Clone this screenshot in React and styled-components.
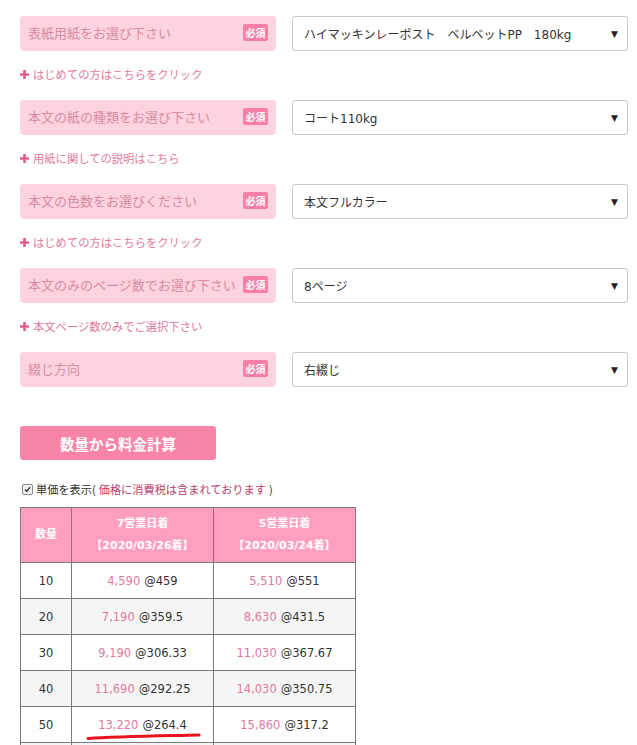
import React from 'react'
import styled, { createGlobalStyle } from 'styled-components'

const GlobalStyle = createGlobalStyle`
  body {
    margin: 0;
    background: #fff;
    font-family: "DejaVu Sans", "Noto Sans CJK JP", sans-serif;
    color: #333;
  }
`

const fields = [
  { label: '表紙用紙をお選び下さい', value: 'ハイマッキンレーポスト　ベルベットPP　180kg', link: 'はじめての方はこちらをクリック' },
  { label: '本文の紙の種類をお選び下さい', value: 'コート110kg', link: '用紙に関しての説明はこちら' },
  { label: '本文の色数をお選びください', value: '本文フルカラー', link: 'はじめての方はこちらをクリック' },
  { label: '本文のみのページ数でお選び下さい', value: '8ページ', link: '本文ページ数のみでご選択下さい' },
  { label: '綴じ方向', value: '右綴じ' },
]

const prices = [
  ['10', '4,590', '@459', '5,510', '@551'],
  ['20', '7,190', '@359.5', '8,630', '@431.5'],
  ['30', '9,190', '@306.33', '11,030', '@367.67'],
  ['40', '11,690', '@292.25', '14,030', '@350.75'],
  ['50', '13,220', '@264.4', '15,860', '@317.2'],
]

const Page = styled.div`
  padding: 16px 9px 0 20px;
`

const Field = styled.div`
  display: flex;
  gap: 16px;
  height: 35px;
`

const Label = styled.div`
  width: 256px;
  box-sizing: border-box;
  background: #fdd3df;
  border-radius: 4px;
  display: flex;
  align-items: center;
  justify-content: space-between;
  padding: 0 8px 2px 8px;
  font-family: "Noto Sans CJK JP", sans-serif;
  font-size: 13px;
  color: #d78ca2;
`

const Badge = styled.span`
  background: #f77fa8;
  color: #fff;
  font-size: 10px;
  font-weight: bold;
  width: 25px;
  height: 17px;
  border-radius: 2px;
  display: flex;
  align-items: center;
  justify-content: center;
`

const Select = styled.div`
  flex: 1;
  box-sizing: border-box;
  border: 1px solid #c8c8c8;
  border-radius: 3px;
  display: flex;
  align-items: center;
  justify-content: space-between;
  padding: 0 9px 0 11px;
  font-size: 12px;
  color: #333;
  font-family: "DejaVu Sans", "Noto Sans CJK JP", sans-serif;
`

const Arrow = styled.span`
  font-size: 9px;
  color: #222;
`

const HelpLink = styled.div`
  margin: 13px 0 16px;
  height: 20px;
  display: flex;
  align-items: center;
  gap: 4px;
  font-family: "Noto Sans CJK JP", sans-serif;
  font-size: 11.3px;
  color: #e07a9e;
  svg { flex: none; }
`

const Spacer = styled.div`
  height: ${p => p.$h}px;
`

const CalcButton = styled.button`
  display: block;
  width: 196px;
  height: 34px;
  border: none;
  border-radius: 3px;
  background: #f885a8;
  color: #fff;
  font-family: "Noto Sans CJK JP", sans-serif;
  font-weight: bold;
  font-size: 14.5px;
  padding: 0;
`

const CheckLine = styled.label`
  display: flex;
  align-items: center;
  gap: 3px;
  margin: 21px 0 10px 2px;
  height: 16px;
  font-family: "Noto Sans CJK JP", sans-serif;
  font-size: 11.2px;
  color: #333;
  em { font-style: normal; color: #b8406e; }
`

const Check = styled.span`
  width: 9px;
  height: 9px;
  border: 1px solid #888;
  border-radius: 2px;
  background: #f2f2f2;
  display: flex;
  align-items: center;
  justify-content: center;
`

const TableWrap = styled.div`
  position: relative;
  width: 335px;
`

const Table = styled.table`
  border-collapse: collapse;
  width: 335px;
  table-layout: fixed;
  font-size: 11.5px;
  th, td {
    border: 1px solid #7a7a7a;
    text-align: center;
    padding: 0;
  }
  th {
    background: #ff9fc0;
    color: #fff;
    font-family: "DejaVu Sans", "Noto Sans CJK JP", sans-serif;
    font-weight: bold;
    font-size: 11px;
    line-height: 22px;
    height: 54px;
  }
  td {
    height: 35px;
    color: #333;
  }
  tbody tr:nth-child(even) td { background: #f5f5f5; }
`

const Price = styled.span`
  color: #e07b9f;
  margin-right: 4px;
`

const Scribble = styled.svg`
  position: absolute;
  left: 66px;
  top: 222px;
  pointer-events: none;
`

const Plus = () => (
  <svg width="9" height="9" viewBox="0 0 9 9">
    <path d="M3.2 0h2.6v3.2H9v2.6H5.8V9H3.2V5.8H0V3.2h3.2z" fill="#e45b8c" />
  </svg>
)

export default function App() {
  return (
    <Page>
      <GlobalStyle />
      {fields.map((f, i) => (
        <React.Fragment key={i}>
          <Field>
            <Label>
              {f.label}
              <Badge>必須</Badge>
            </Label>
            <Select>
              <span>{f.value}</span>
              <Arrow>▼</Arrow>
            </Select>
          </Field>
          {f.link && (
            <HelpLink>
              <Plus />
              {f.link}
            </HelpLink>
          )}
        </React.Fragment>
      ))}
      <Spacer $h={39} />
      <CalcButton>数量から料金計算</CalcButton>
      <CheckLine>
        <Check>
          <svg width="7" height="7" viewBox="0 0 7 7">
            <path d="M1 3.6l1.7 1.8L6 1.2" stroke="#333" strokeWidth="1.4" fill="none" />
          </svg>
        </Check>
        単価を表示(<em>価格に消費税は含まれております</em>)
      </CheckLine>
      <TableWrap>
        <Table>
          <colgroup>
            <col style={{ width: 51 }} />
            <col style={{ width: 142 }} />
            <col style={{ width: 142 }} />
          </colgroup>
          <thead>
            <tr>
              <th>数量</th>
              <th>7営業日着<br />【2020/03/26着】</th>
              <th>5営業日着<br />【2020/03/24着】</th>
            </tr>
          </thead>
          <tbody>
            {prices.map(r => (
              <tr key={r[0]}>
                <td>{r[0]}</td>
                <td><Price>{r[1]}</Price>{r[2]}</td>
                <td><Price>{r[3]}</Price>{r[4]}</td>
              </tr>
            ))}
            <tr>
              <td />
              <td />
              <td />
            </tr>
          </tbody>
        </Table>
        <Scribble width="116" height="12" viewBox="0 0 116 12">
          <path d="M2 9.5 C 30 7.5, 70 7, 113 6" stroke="#e8131c" strokeWidth="3" strokeLinecap="round" fill="none" />
        </Scribble>
      </TableWrap>
    </Page>
  )
}
